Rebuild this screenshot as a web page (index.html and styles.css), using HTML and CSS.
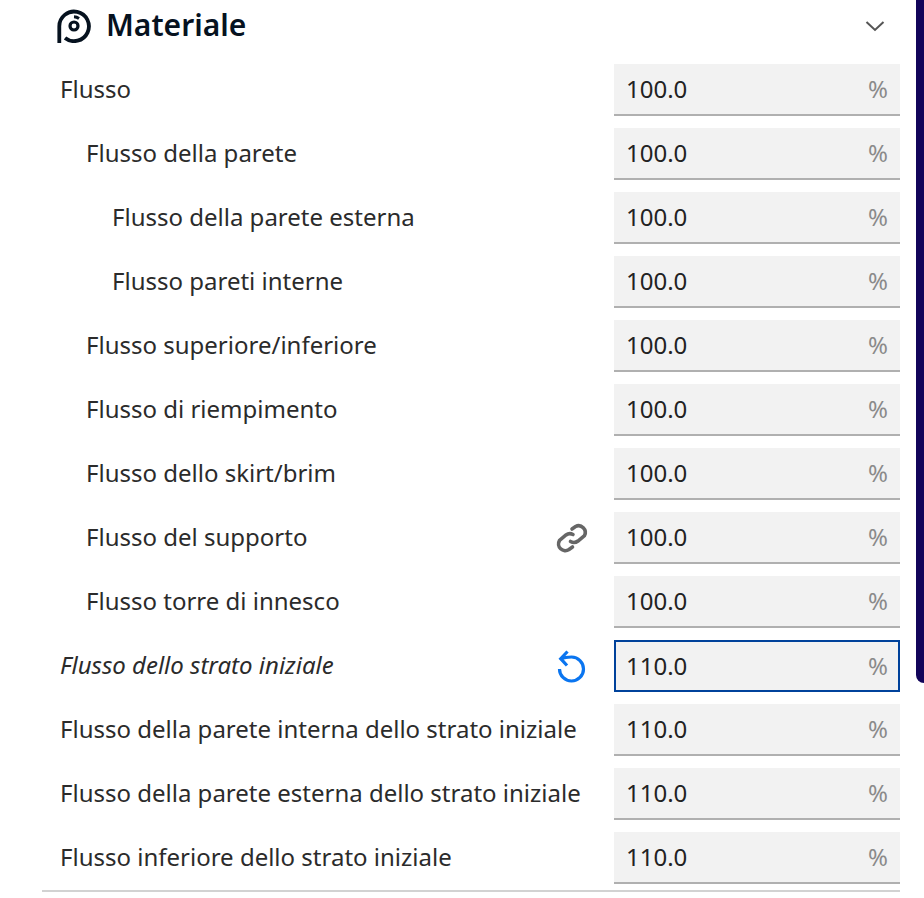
FILE: index.html
```html
<!DOCTYPE html>
<html lang="it">

<head>
    <meta charset="UTF-8">
    <meta name="viewport" content="width=device-width, initial-scale=1.0">
    <title>Materiale</title>
    <link rel="stylesheet" href="styles.css">
</head>

<body>
    <main class="panel">
        <header class="panel-head">
            <svg class="spool" viewBox="0 0 34 34" fill="none" stroke="#06121f">
                <path d="M2.300 34V17.500A14.800 14.800 0 1 1 8 29" stroke-width="3.800"/>
                <circle cx="17" cy="17" r="4" stroke-width="3.200"/>
                <path d="M17 7.800A10 10 0 0 1 22 9.500" stroke-width="3"/>
            </svg>
            <h2>Materiale</h2>
            <svg class="chevron" viewBox="0 0 20 12" fill="none" stroke="#555" stroke-width="2">
                <path d="M1.500 2 10 10l8.500-8"/>
            </svg>
        </header>

        <div class="row">
            <span class="label">Flusso</span>
            <div class="field"><span>100.0</span><span class="unit">%</span></div>
        </div>
        <div class="row lvl1">
            <span class="label">Flusso della parete</span>
            <div class="field"><span>100.0</span><span class="unit">%</span></div>
        </div>
        <div class="row lvl2">
            <span class="label">Flusso della parete esterna</span>
            <div class="field"><span>100.0</span><span class="unit">%</span></div>
        </div>
        <div class="row lvl2">
            <span class="label">Flusso pareti interne</span>
            <div class="field"><span>100.0</span><span class="unit">%</span></div>
        </div>
        <div class="row lvl1">
            <span class="label">Flusso superiore/inferiore</span>
            <div class="field"><span>100.0</span><span class="unit">%</span></div>
        </div>
        <div class="row lvl1">
            <span class="label">Flusso di riempimento</span>
            <div class="field"><span>100.0</span><span class="unit">%</span></div>
        </div>
        <div class="row lvl1">
            <span class="label">Flusso dello skirt/brim</span>
            <div class="field"><span>100.0</span><span class="unit">%</span></div>
        </div>
        <div class="row lvl1">
            <span class="label">Flusso del supporto</span>
            <svg class="row-icon" viewBox="0 0 32 32" fill="none" stroke="#666" stroke-width="3.600" stroke-linecap="round">
                <path d="M16 7 19.500 4.500A6.700 6.700 0 0 1 28.500 13.500L22 19A6.700 6.700 0 0 1 14.500 19.500"/>
                <path d="M16.500 25 13 27.500A6.700 6.700 0 0 1 3.500 18.500L10 13A6.700 6.700 0 0 1 17 12.500"/>
            </svg>
            <div class="field"><span>100.0</span><span class="unit">%</span></div>
        </div>
        <div class="row lvl1">
            <span class="label">Flusso torre di innesco</span>
            <div class="field"><span>100.0</span><span class="unit">%</span></div>
        </div>
        <div class="row">
            <span class="label changed">Flusso dello strato iniziale</span>
            <svg class="row-icon" viewBox="0 0 32 32" fill="none" stroke="#0a75f0" stroke-width="3.200">
                <path d="M5.500 8.800C8 7.500 12 7 15.500 7A12 12 0 1 1 3.500 19"/>
                <path d="M11.500 1.500 4.700 8.700 11 15.500"/>
            </svg>
            <div class="field active"><span>110.0</span><span class="unit">%</span></div>
        </div>
        <div class="row">
            <span class="label">Flusso della parete interna dello strato iniziale</span>
            <div class="field"><span>110.0</span><span class="unit">%</span></div>
        </div>
        <div class="row">
            <span class="label">Flusso della parete esterna dello strato iniziale</span>
            <div class="field"><span>110.0</span><span class="unit">%</span></div>
        </div>
        <div class="row">
            <span class="label">Flusso inferiore dello strato iniziale</span>
            <div class="field"><span>110.0</span><span class="unit">%</span></div>
        </div>
    </main>
    <div class="edge"></div>
</body>

</html>
```

FILE: styles.css
```css
* {
    margin: 0;
    padding: 0;
    box-sizing: border-box;
}

html,
body {
    height: 100%;
    overflow: hidden;
}

body {
    display: flex;
    align-items: flex-start;
    padding-left: 42px;
    background-color: #fff;
    color: #2b2b2b;
    font-family: "Noto Sans", "Open Sans", sans-serif;
    font-size: 24px;
    line-height: 32px;
}

.panel {
    width: 858px;
    height: 892px;
    border-bottom: 2px solid #d2d2d2;
}

.panel-head {
    display: flex;
    align-items: center;
    height: 52px;
    margin-bottom: 12px;
    padding-left: 15px;
    padding-right: 15px;
}

.panel-head h2 {
    flex: 1;
    margin-left: 15px;
    color: #06121f;
    font-size: 30px;
    font-weight: 600;
    line-height: 50px;
    padding-bottom: 2px;
}

.spool {
    width: 34px;
    height: 34px;
}

.chevron {
    width: 20px;
    height: 12px;
}

.row {
    display: flex;
    align-items: center;
    height: 52px;
    margin-bottom: 12px;
    padding-left: 18px;
}

.row:last-child {
    margin-bottom: 0;
}

.lvl1 {
    padding-left: 44px;
}

.lvl2 {
    padding-left: 70px;
}

.label {
    flex: 1;
    margin-bottom: 2px;
    white-space: nowrap;
}

.changed {
    font-style: italic;
}

.row-icon {
    width: 32px;
    height: 32px;
    margin-right: 26px;
    overflow: visible;
}

.field {
    display: flex;
    justify-content: space-between;
    align-items: center;
    width: 286px;
    height: 52px;
    padding: 0 12px;
    background-color: #f2f2f2;
    border-bottom: 2px solid #b0b0b0;
    color: #222;
}

.field.active {
    padding: 0 10px;
    border: 2px solid #00429b;
}

.unit {
    color: #8a8a8a;
}

.edge {
    width: 8px;
    height: 683px;
    margin-left: 16px;
    background-color: #12045a;
    border-bottom-left-radius: 8px;
}
```
